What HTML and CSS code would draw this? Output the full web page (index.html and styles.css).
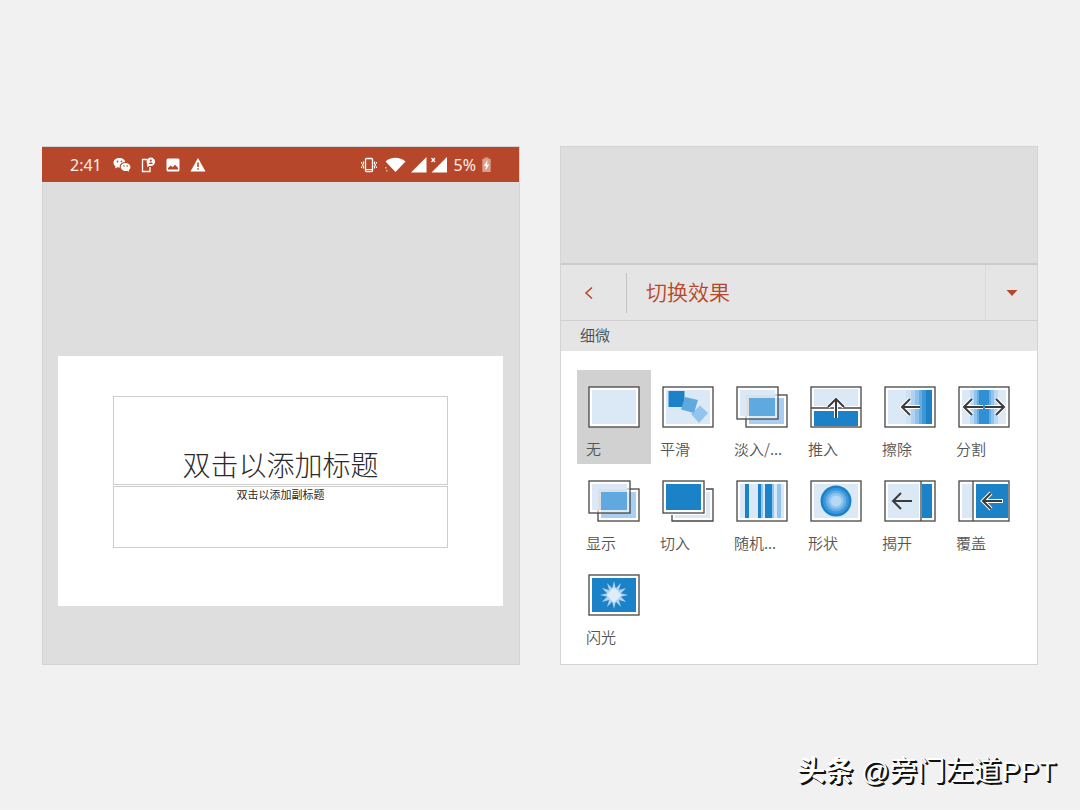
FILE: index.html
```html
<!DOCTYPE html>
<html lang="zh-CN">
<head>
<meta charset="utf-8">
<meta name="viewport" content="width=device-width, initial-scale=1">
<title>切换效果</title>
<link rel="stylesheet" href="styles.css">
</head>
<body>
<main class="screens">
  <section class="panel editor">
    <header class="status">
      <span class="status-text clock">2:41</span>
      <svg class="status-icon wechat" width="18" height="16" viewBox="0 0 18 16">
        <path fill="#fff" d="M6.500 1C3 1 .5 3 .5 5.700c0 1.500.8 2.800 2.100 3.700L2 11.500l2.300-1.200c.7.200 1.400.3 2.200.3h.4C6.300 7.200 9 5 12.300 5 11.700 2.600 9.400 1 6.500 1z"/>
        <path fill="#fff" d="M12.500 6C9.800 6 7.700 7.800 7.700 10s2.100 4 4.800 4c.6 0 1.200-.1 1.700-.3l2 1.100-.5-1.800c1.100-.7 1.700-1.800 1.700-3C17.400 7.800 15.200 6 12.500 6z"/>
        <g fill="#b7472a"><circle cx="4.500" cy="4.500" r=".9"/><circle cx="8.500" cy="4.300" r=".9"/><circle cx="11" cy="9" r=".8"/><circle cx="14.200" cy="9" r=".8"/></g>
      </svg>
      <svg class="status-icon" width="16" height="16" viewBox="0 0 16 16">
        <path fill="none" stroke="#fff" stroke-width="1.300" d="M7 2.500H2.500v12h7.500V10"/>
        <circle cx="10.800" cy="4.700" r="4.200" fill="#fff"/><path fill="#fff" d="M7.500 6.500 7 10l3.500-1.500z"/>
        <circle cx="10.800" cy="3.600" r="1.100" fill="#b7472a"/><path fill="#b7472a" d="M8.800 6.900c0-2 4-2 4 0z"/>
      </svg>
      <svg class="status-icon" width="16" height="16" viewBox="0 0 16 16">
        <rect x="1.500" y="1.500" width="13" height="13" rx="1.500" fill="#fff"/>
        <path fill="#b7472a" d="M3 12.500v-1.500l2.800-2.500 1.700 1.800 2.600-2.600 3 3.300v1.500z"/>
      </svg>
      <svg class="status-icon" width="16" height="16" viewBox="0 0 16 16">
        <path fill="#fff" d="M8 1 15.500 14.500H.5z"/>
        <path fill="#b7472a" d="M7.200 5.500h1.600v4.500H7.200zM7.200 11.200h1.600v1.600H7.200z"/>
      </svg>
      <div class="status-right">
        <svg class="status-icon" width="16" height="16" viewBox="0 0 16 16">
          <rect x="4.500" y="1.500" width="7" height="13" rx="1" fill="none" stroke="#fff" stroke-width="1.300"/>
          <path fill="none" stroke="#fff" stroke-width="1.200" d="M5 12.500h6M2.500 4.500v2l-1 1.500 1 1.500v2M.5 5v1.500M.5 9.500V11M13.500 4.500v2l1 1.500-1 1.500v2M15.500 5v1.500M15.500 9.500V11"/>
        </svg>
        <svg class="status-icon wifi" width="22" height="16" viewBox="0 0 22 16">
          <path fill="#fff" d="M.5 4.500C6-.5 14.500-.5 20.500 4.500L10.500 15z"/>
          <path fill="#e7b8a8" d="M0 10h1.500v1.500H0zM1 13h1.500v1.500H1z"/>
        </svg>
        <svg class="status-icon" width="16" height="16" viewBox="0 0 16 16"><path fill="#fff" d="M15.500 0v15.500H0z"/></svg>
        <svg class="status-icon bars" width="18" height="16" viewBox="0 0 18 16"><path fill="#fff" d="M17 0v15.500H1.500z"/><path stroke="#fff" stroke-width="1.200" d="m1.500 1 3.500 4M5 1 1.500 5"/></svg>
        <span class="status-text">5%</span>
        <svg class="status-icon" width="9" height="16" viewBox="0 0 9 16">
          <path fill="#da9f8d" d="M2.500.5h4v1.200H8a.7.7 0 0 1 .7.700v12a.7.7 0 0 1-.7.700H1a.7.7 0 0 1-.7-.7v-12A.7.7 0 0 1 1 1.700h1.500z"/>
          <path fill="#fff" d="M5.500 3 1.800 9h2.200l-.5 4.500L7.200 7.500H5z"/>
        </svg>
      </div>
    </header>
    <div class="canvas">
      <div class="slide">
        <div class="placeholder title-box">双击以添加标题</div>
        <div class="placeholder subtitle-box">双击以添加副标题</div>
      </div>
    </div>
  </section>

  <section class="panel picker">
    <div class="backdrop"></div>
    <header class="toolbar">
      <button class="back" aria-label="返回"><svg width="10" height="14" viewBox="0 0 10 14"><path fill="none" stroke="#b7472a" stroke-width="1.600" d="M8 1.500 2 7l6 5.500"/></svg></button>
      <h1 class="heading">切换效果</h1>
      <button class="collapse" aria-label="收起"><svg width="12" height="6" viewBox="0 0 12 6"><path fill="#b7472a" d="M.5 0h11L6 6z"/></svg></button>
    </header>
    <h2 class="group">细微</h2>
    <div class="effects">
      <button class="effect selected" aria-pressed="true">
        <svg class="icon" viewBox="0 0 52 42"><rect class="frame" x="1" y="1" width="50" height="40"/><path class="pale" d="M4 4h44v34H4z"/></svg>
        <span>无</span>
      </button>
      <button class="effect">
        <svg class="icon" viewBox="0 0 52 42"><rect class="frame" x="1" y="1" width="50" height="40"/><path class="pale" d="M4 4h44v34H4z"/><path class="blue" d="M6.500 5h16v16h-16z"/><path fill="#92c4ee" d="m38 19.500 8 7.500-9 10-8-9z"/><path class="mid" d="m23 11 13 3-4 13-13-3.500z"/></svg>
        <span>平滑</span>
      </button>
      <button class="effect">
        <svg class="icon" viewBox="0 0 52 42"><rect class="frame" x="10" y="9" width="41" height="32"/><path fill="#a9cef1" d="M13 12h35v26H13z"/><rect x="1" y="1" width="41" height="32" fill="#fff" fill-opacity=".6" stroke="#454545" stroke-width="1.300"/><path class="pale" d="M4 4h35v8H13v18H4z"/><path fill="#dcdfe3" d="M10 9h29v3H13v18h-3z"/><path class="mid" d="M13 12h26v18H13z"/></svg>
        <span>淡入/...</span>
      </button>
      <button class="effect">
        <svg class="icon" viewBox="0 0 52 42"><rect class="frame" x="1" y="1" width="50" height="40"/><path class="pale" d="M4 3h44v17H4z"/><path class="line" d="M1 22h50"/><path class="blue" d="M4 25h44v15H4z"/><path class="halo" d="M26 32V14M18 21l8-8 8 8"/><path class="arrow" d="M26 32V14M18 21l8-8 8 8"/></svg>
        <span>推入</span>
      </button>
      <button class="effect">
        <svg class="icon" viewBox="0 0 52 42"><rect class="frame" x="1" y="1" width="50" height="40"/><path class="pale" d="M4 4h18v34H4z"/><path fill="#cbe1f5" d="M22 4h5v34h-5z"/><path fill="#b1d3f1" d="M27 4h4v34h-4z"/><path fill="#8fc1ea" d="M31 4h4v34h-4z"/><path fill="#65ace0" d="M35 4h3v34h-3z"/><path fill="#3e97d4" d="M38 4h4v34h-4z"/><path class="blue" d="M42 4h6v34h-6z"/><path class="halo" d="M36 21H18M26 13l-8 8 8 8"/><path class="arrow" d="M36 21H18M26 13l-8 8 8 8"/></svg>
        <span>擦除</span>
      </button>
      <button class="effect">
        <svg class="icon" viewBox="0 0 52 42"><rect class="frame" x="1" y="1" width="50" height="40"/><path class="pale" d="M4 4h44v34H4z"/><path fill="#bcd9f3" d="M12 4h28v34H12z"/><path fill="#90c3ed" d="M16 4h20v34H16z"/><path fill="#64ade3" d="M19 4h14v34H19z"/><path fill="#318fd4" d="M21 4h10v34H21z"/><path class="halo" d="M25 21H6M14 13l-8 8 8 8M27 21h19M38 13l8 8-8 8"/><path class="arrow" d="M25 21H6M14 13l-8 8 8 8M27 21h19M38 13l8 8-8 8"/></svg>
        <span>分割</span>
      </button>
      <button class="effect">
        <svg class="icon" viewBox="0 0 52 42"><rect class="frame" x="10" y="9" width="41" height="32"/><path fill="#a9cef1" d="M13 12h35v26H13z"/><rect x="1" y="1" width="41" height="32" fill="#fff" fill-opacity=".6" stroke="#454545" stroke-width="1.300"/><path class="pale" d="M4 4h35v8H13v18H4z"/><path fill="#dcdfe3" d="M10 9h29v3H13v18h-3z"/><path class="mid" d="M13 12h26v18H13z"/></svg>
        <span>显示</span>
      </button>
      <button class="effect">
        <svg class="icon" viewBox="0 0 52 42"><path class="line" d="M44 9h7v32H10v-6"/><path class="pale" d="M44 12h4v26H13v-3h31z"/><rect class="frame" x="1" y="1" width="41" height="32"/><path class="blue" d="M4 4h35v26H4z"/></svg>
        <span>切入</span>
      </button>
      <button class="effect">
        <svg class="icon" viewBox="0 0 52 42"><rect class="frame" x="1" y="1" width="50" height="40"/><path class="pale" d="M4 4h44v34H4z"/><path class="blue" d="M9 4h4v34H9zM22 4h3v34h-3zM29 4h7v34h-7z"/><path fill="#92c4ee" d="M25 4h2v34h-2zM36 4h2v34h-2zM41 4h4v34h-4z"/></svg>
        <span>随机...</span>
      </button>
      <button class="effect">
        <svg class="icon" viewBox="0 0 52 42"><rect class="frame" x="1" y="1" width="50" height="40"/><path class="pale" d="M4 4h44v34H4z"/><circle cx="26" cy="21" r="15.500" fill="#1b82c8"/><circle cx="26" cy="21" r="13" fill="#3c96d7"/><circle cx="26" cy="21" r="10.500" fill="#62ade3"/><circle cx="26" cy="21" r="8" fill="#8ec3ed"/><circle cx="26" cy="21" r="5.500" fill="#b5d8f5"/></svg>
        <span>形状</span>
      </button>
      <button class="effect">
        <svg class="icon" viewBox="0 0 52 42"><rect class="frame" x="1" y="1" width="50" height="40"/><path class="pale" d="M4 4h31v34H4z"/><path class="line" d="M37 1v40"/><path class="blue" d="M38 4h10v34H38z"/><path class="arrow" d="M28 21H9M17 13l-8 8 8 8"/></svg>
        <span>揭开</span>
      </button>
      <button class="effect">
        <svg class="icon" viewBox="0 0 52 42"><rect class="frame" x="1" y="1" width="50" height="40"/><path class="pale" d="M4 4h10v34H4z"/><path class="line" d="M15 1v40"/><path class="blue" d="M18 4h32v34H18z"/><path class="halo" d="M45 21H25M33 13l-8 8 8 8"/><path class="arrow" d="M44 21H25M33 13l-8 8 8 8"/></svg>
        <span>覆盖</span>
      </button>
      <button class="effect">
        <svg class="icon" viewBox="0 0 52 42"><rect class="frame" x="1" y="1" width="50" height="40"/><path class="blue" d="M4 4h44v34H4z"/><path fill="#a9d2f3" d="m26 7 1.800 7.300L33 9l-2.100 7.100 7.300-2.100-5.300 5.200L40 21l-7.100 1.800 5.300 5.200-7.300-2.100L33 33l-5.200-5.300L26 35l-1.800-7.300L19 33l2.100-7.100-7.300 2.100 5.300-5.200L12 21l7.100-1.800-5.300-5.200 7.300 2.100L19 9l5.200 5.300z"/><path fill="#dfedfa" d="m26 13 7.500 8-7.500 8-7.500-8z"/></svg>
        <span>闪光</span>
      </button>
    </div>
  </section>
</main>
<footer class="credit"><b>头条</b> @旁门左道PPT</footer>
</body>
</html>
```
FILE: styles.css
```css
* { box-sizing: border-box; }

body {
  margin: 0;
  background: #f1f1f1;
  font-family: "Noto Sans", "Noto Sans CJK SC", sans-serif;
}

button {
  border: 0;
  padding: 0;
  background: none;
  color: inherit;
  font: inherit;
  cursor: pointer;
}

svg { display: block; }

.screens {
  display: grid;
  grid-template-columns: 1fr 1fr;
  gap: 40px;
  padding: 146px 42px 0;
}

.panel {
  display: flex;
  flex-direction: column;
  min-height: 518px;
  border: 1px solid #d4d4d4;
  background: #dedede;
}

.status {
  display: flex;
  align-items: center;
  height: 35px;
  margin: 0 0 0 -1px;
  padding: 0 28px;
  gap: 9px;
  background: #b7472a;
  color: #fbeeea;
}

.status-text {
  font-size: 16px;
  font-weight: 400;
  line-height: 24px;
}
.clock { padding-right: 2px; }
.status-icon { flex: none; }

.status-right {
  display: flex;
  align-items: center;
  gap: 6px;
  margin-left: auto;
}
.status-right .wifi { margin: 0 -2px 0 2px; }
.status-right .bars { margin-left: -3px; }

.canvas {
  flex: 1;
  padding: 174px 16px 56px 15px;
}

.slide {
  display: flex;
  flex-direction: column;
  gap: 1px;
  min-height: 250px;
  padding: 40px 55px;
  background: #fff;
}

.placeholder {
  border: 1px solid #cdcdcd;
  color: #2a2a2a;
  text-align: center;
  font-family: "Noto Sans CJK SC", sans-serif;
}

.title-box {
  height: 89px;
  padding-top: 47px;
  font-size: 28px;
  line-height: 40px;
  font-weight: 300;
}

.subtitle-box {
  height: 62px;
  font-size: 11px;
  line-height: 14px;
}

.picker { background: #fff; }

.backdrop {
  height: 118px;
  border-bottom: 2px solid #cbcbcb;
  background: #dedede;
}

.toolbar {
  display: flex;
  align-items: center;
  height: 56px;
  border-bottom: 1px solid #cfcfcf;
  background: #e5e5e5;
  color: #b7472a;
}

.back {
  display: grid;
  place-items: center;
  width: 66px;
  height: 40px;
  padding-right: 10px;
  border-right: 1px solid #c4c4c4;
}

.heading {
  flex: 1;
  margin: 0;
  padding: 0 0 3px 19px;
  font: 350 21px/32px "Noto Sans CJK SC", sans-serif;
}

.collapse {
  display: grid;
  place-items: center;
  align-self: stretch;
  width: 52px;
  border-left: 1px solid #dadada;
}

.group {
  margin: 0;
  padding: 0 19px 2px;
  background: #e5e5e5;
  color: #4a4a4a;
  font: 350 15px/28px "Noto Sans CJK SC", sans-serif;
}

.effects {
  display: grid;
  grid-template-columns: repeat(auto-fill, 74px);
  padding: 19px 16px 12px;
}

.effect {
  padding: 16px 0 3px 9px;
  text-align: left;
  color: #555;
  font: 350 15px/24px "Noto Sans CJK SC", sans-serif;
}
.effect.selected { background: #d1d1d1; }
.effect span { display: block; }

.icon {
  width: 52px;
  height: 42px;
  margin: 0 2px 9px;
}

.frame { fill: #fff; stroke: #454545; stroke-width: 1.3px; }
.line { fill: none; stroke: #454545; stroke-width: 1.3px; }
.pale { fill: #dbe9f7; }
.mid { fill: #60a9e0; }
.blue { fill: #1b82c8; }
.arrow { fill: none; stroke: #3b3b3b; stroke-width: 2px; }
.halo { fill: none; stroke: #fff; stroke-width: 4px; }

.credit {
  padding: 87px 24px 0;
  text-align: right;
  color: #fff;
  font: 400 28px/40px "Liberation Sans", "Noto Sans CJK SC", sans-serif;
  text-shadow: 1px 1px 0 #111, 2px 2px 0 #111;
}
.credit b { font-weight: 700; }
```
